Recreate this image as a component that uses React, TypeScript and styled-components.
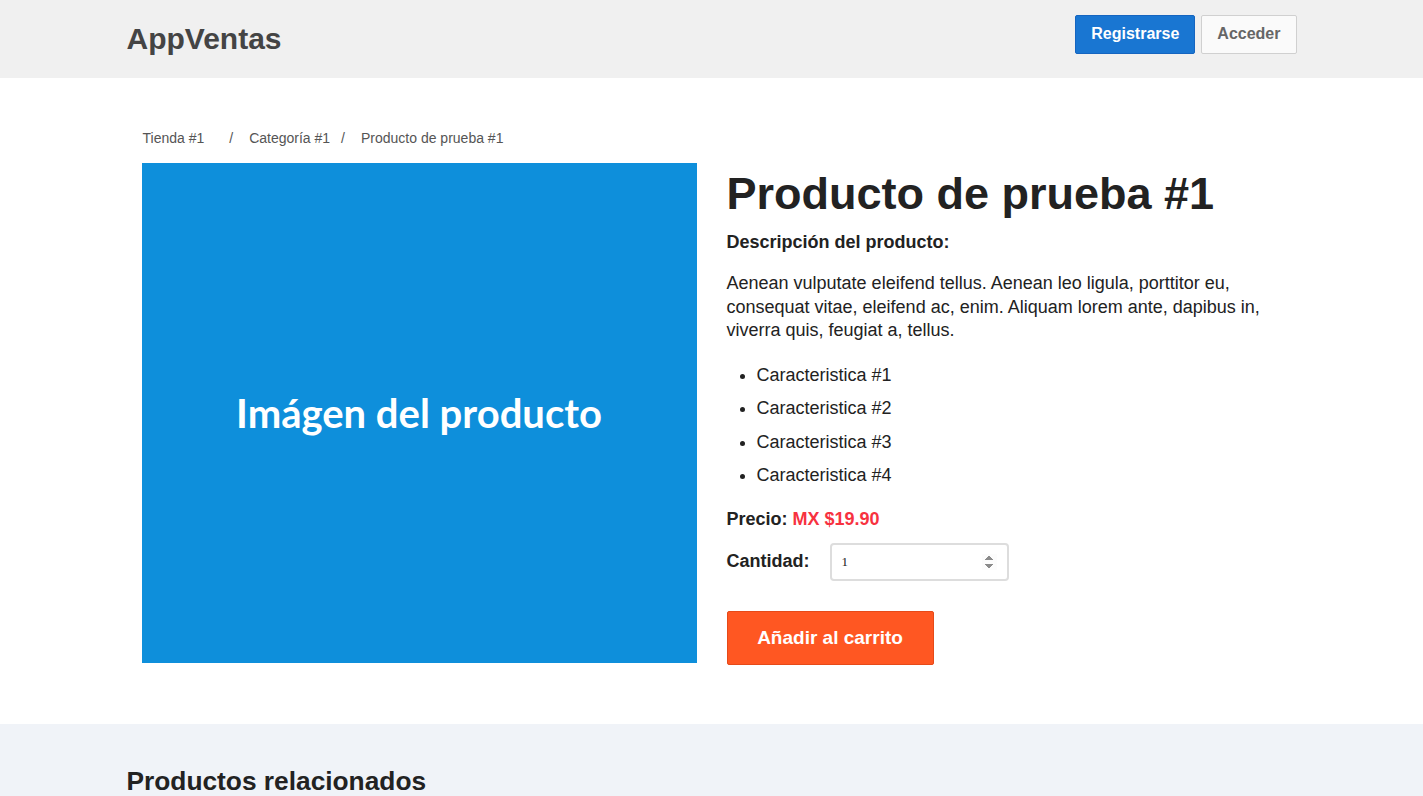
import React, {useState} from 'react';
import styled, {createGlobalStyle} from 'styled-components';

const GlobalStyle = createGlobalStyle`
  body {
    margin: 0;
    font-family: "Liberation Sans", Arial, sans-serif;
    color: #222;
    background: #fff;
  }
`;

const Header = styled.header`
  background: #f0f0f0;
  height: 78px;
`;

const Container = styled.div`
  width: 1170px;
  margin: 0 auto;
`;

const HeaderInner = styled(Container)`
  height: 100%;
  display: flex;
  align-items: center;
  justify-content: space-between;
`;

const Logo = styled.div`
  font-size: 30px;
  font-weight: bold;
  color: #444;
`;

const Nav = styled.div`
  display: flex;
  gap: 6px;
  margin-top: -10px;
`;

interface NavButtonProps {
  primary?: boolean;
}

const NavButton = styled.button<NavButtonProps>`
  height: 39px;
  padding: 0 15px;
  font-family: "Liberation Sans", Arial, sans-serif;
  font-size: 16px;
  font-weight: bold;
  border-radius: 2px;
  cursor: pointer;
  background: ${p => (p.primary ? '#1976d2' : '#fafafa')};
  color: ${p => (p.primary ? '#fff' : '#666')};
  border: 1px solid ${p => (p.primary ? '#1565c0' : '#d0d0d0')};
`;

const Main = styled(Container)`
  padding: 52px 0 59px;
`;

const Breadcrumb = styled.nav`
  display: flex;
  font-size: 14px;
  color: #555;
  padding-left: 16px;
  margin-bottom: 17px;
  line-height: 16px;
`;

const Crumb = styled.span`
  &:first-child {
    margin-right: 14px;
  }
`;

const Sep = styled.span`
  margin: 0 16px 0 11px;
`;

const Row = styled.div`
  display: flex;
  gap: 30px;
  padding: 0 15px;
  align-items: flex-start;
`;

const ImageBox = styled.div`
  width: 555px;
  height: 500px;
  flex-shrink: 0;
  background: #0e8fdb;
  display: flex;
  align-items: center;
  justify-content: center;
  color: #fff;
  font-family: Lato, "Liberation Sans", sans-serif;
  font-weight: 700;
  font-size: 40px;
`;

const Details = styled.div`
  width: 555px;
`;

const Title = styled.h1`
  margin: 3px 0 0;
  font-size: 45px;
  line-height: 56px;
  color: #222;
`;

const Label = styled.div`
  font-size: 18px;
  font-weight: bold;
  margin-top: 10px;
`;

const Paragraph = styled.p`
  font-size: 18px;
  line-height: 23.5px;
  margin: 19px 0 0;
`;

const Features = styled.ul`
  margin: 22px 0 0;
  padding-left: 30px;
  font-size: 18px;
`;

const Feature = styled.li`
  line-height: 20px;
  margin-bottom: 13.5px;
`;

const Price = styled.div`
  font-size: 18px;
  font-weight: bold;
  margin-top: 24px;
`;

const Amount = styled.span`
  color: #f7323f;
`;

const QtyRow = styled.div`
  display: flex;
  align-items: flex-start;
  margin-top: 13px;
`;

const QtyLabel = styled.label`
  font-size: 18px;
  font-weight: bold;
  width: 103px;
  padding-top: 8px;
`;

const QtyInput = styled.input`
  width: 179px;
  height: 38px;
  box-sizing: border-box;
  border: 2px solid #ddd;
  border-radius: 4px;
  padding: 0 10px;
  font-family: "Liberation Serif", serif;
  font-size: 13px;
  color: #222;

  &::-webkit-inner-spin-button {
    opacity: 1;
  }
`;

const CartButton = styled.button`
  margin-top: 30px;
  width: 207px;
  height: 54px;
  background: #ff5722;
  border: 1px solid #e64a19;
  border-radius: 2px;
  color: #fff;
  font-family: "Liberation Sans", Arial, sans-serif;
  font-size: 19px;
  font-weight: bold;
  cursor: pointer;
`;

const Related = styled.section`
  background: #f0f3f8;
  padding: 42px 0 40px;
`;

const RelatedTitle = styled.h2`
  margin: 0;
  font-size: 26.3px;
  line-height: 30px;
  color: #222;
`;

const features = ['Caracteristica #1', 'Caracteristica #2', 'Caracteristica #3', 'Caracteristica #4'];

const App: React.FC = () => {
  const [qty, setQty] = useState(1);
  return (
    <>
      <GlobalStyle />
      <Header>
        <HeaderInner>
          <Logo>AppVentas</Logo>
          <Nav>
            <NavButton primary type="button">Registrarse</NavButton>
            <NavButton type="button">Acceder</NavButton>
          </Nav>
        </HeaderInner>
      </Header>

      <Main>
        <Breadcrumb>
          <Crumb>Tienda #1</Crumb>
          <Sep>/</Sep>
          <Crumb>Categoría #1</Crumb>
          <Sep>/</Sep>
          <Crumb>Producto de prueba #1</Crumb>
        </Breadcrumb>

        <Row>
          <ImageBox>Imágen del producto</ImageBox>
          <Details>
            <Title>Producto de prueba #1</Title>
            <Label>Descripción del producto:</Label>
            <Paragraph>
              Aenean vulputate eleifend tellus. Aenean leo ligula, porttitor eu, consequat vitae, eleifend ac,
              enim. Aliquam lorem ante, dapibus in, viverra quis, feugiat a, tellus.
            </Paragraph>
            <Features>
              {features.map(f => (
                <Feature key={f}>{f}</Feature>
              ))}
            </Features>
            <Price>
              Precio: <Amount>MX $19.90</Amount>
            </Price>
            <QtyRow>
              <QtyLabel htmlFor="qty">Cantidad:</QtyLabel>
              <QtyInput
                id="qty"
                type="number"
                min={1}
                value={qty}
                onChange={e => setQty(Number(e.target.value))}
              />
            </QtyRow>
            <CartButton type="button">Añadir al carrito</CartButton>
          </Details>
        </Row>
      </Main>

      <Related>
        <Container>
          <RelatedTitle>Productos relacionados</RelatedTitle>
        </Container>
      </Related>
    </>
  );
};

export default App;
